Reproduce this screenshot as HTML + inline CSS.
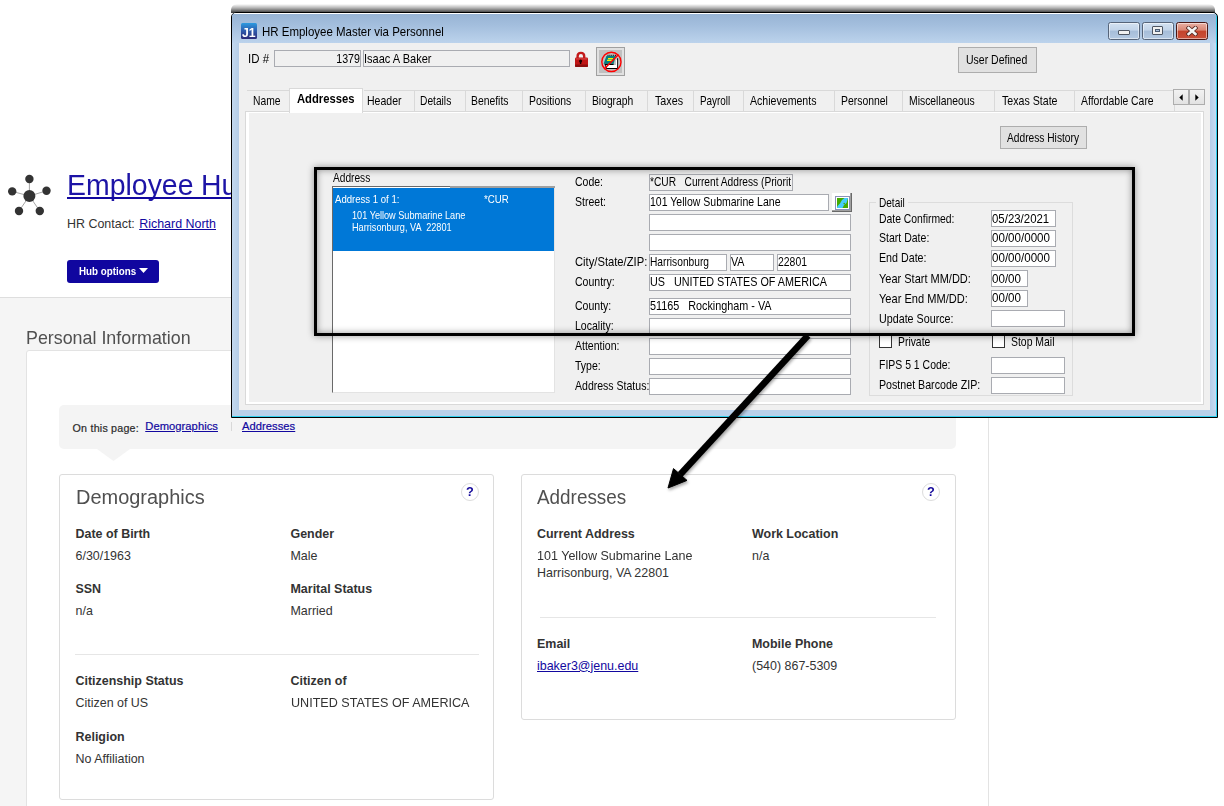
<!DOCTYPE html>
<html lang="en"><head><meta charset="utf-8"><title>Employee Hub - Personal Information</title>
<style>
html,body{margin:0;padding:0;background:#fff;}
body{width:1224px;height:806px;overflow:hidden;font-family:"Liberation Sans",sans-serif;}
#root{position:relative;width:1224px;height:806px;overflow:hidden;background:#fff;}
.t{position:absolute;white-space:pre;transform-origin:0 50%;display:block;}
.b{position:absolute;box-sizing:border-box;}
.u{text-decoration:underline;}
.tb{background:#fff;border:1px solid #a9abb1;}
.tbd{background:#f0f0f0;border:1px solid #a9abb1;}
.btn{background:#e1e1e1;border:1px solid #adadad;}
.card{background:#fff;border:1px solid #dcdcdc;border-radius:3px;}
.hr{background:#e6e6e6;}
.tab{border-top:1px solid #d9d9d9;border-right:1px solid #d9d9d9;background:#f0f0f0;}
.chk{background:#fff;border:1px solid #333;}

</style></head>
<body>
<div id="root">
<div class="b" style="left:0px;top:298px;width:989px;height:508px;background:#f5f5f5;"></div>
<div class="b" style="left:0px;top:297px;width:989px;height:1px;background:#dedede;"></div>
<svg class="b" style="left:5px;top:172px" width="50" height="46" viewBox="5 172 50 46">
<g stroke="#666" stroke-width=".6" fill="#333">
<line x1="29.4" y1="196" x2="29.4" y2="179"/><line x1="29.4" y1="196" x2="12.2" y2="191.4"/>
<line x1="29.4" y1="196" x2="46.5" y2="190.8"/><line x1="29.4" y1="196" x2="19" y2="211"/>
<line x1="29.4" y1="196" x2="39.8" y2="211"/>
<circle cx="29.4" cy="196" r="6" stroke="none"/><circle cx="29.4" cy="179" r="4.2" stroke="none"/>
<circle cx="12.2" cy="191.4" r="4.2" stroke="none"/><circle cx="46.5" cy="190.8" r="4.2" stroke="none"/>
<circle cx="19" cy="211" r="4.2" stroke="none"/><circle cx="39.8" cy="211" r="4.2" stroke="none"/>
</g></svg>
<span class="t" style="left:67.00px;top:170.13px;font-size:29.5px;line-height:29.5px;color:#1d14a6;transform:scaleX(0.9643);">Employee</span>
<span class="t" style="left:200.50px;top:170.13px;font-size:29.5px;line-height:29.5px;color:#1d14a6;transform:scaleX(0.9609);">Hub</span>
<div class="b" style="left:67px;top:197.2px;width:190px;height:2px;background:#12089f;"></div>
<span class="t" style="left:67.00px;top:218.45px;font-size:12.46px;line-height:12.46px;color:#333;">HR Contact:</span>
<span class="t u" style="left:139.20px;top:218.45px;font-size:12.46px;line-height:12.46px;color:#12089f;">Richard North</span>
<div class="b" style="left:67px;top:260px;width:92px;height:23px;background:#10069f;border-radius:3px;"></div>
<span class="t" style="left:78.60px;top:266.26px;font-size:10.8px;line-height:10.8px;color:#fff;font-weight:bold;transform:scaleX(0.9065);">Hub options</span>
<svg class="b" style="left:139px;top:267.7px" width="9" height="5" viewBox="0 0 9 5"><path d="M0 0H9L4.5 5Z" fill="#fff"/></svg>
<span class="t" style="left:26.20px;top:328.86px;font-size:18.6px;line-height:18.6px;color:#505050;transform:scaleX(0.9596);">Personal Information</span>
<div class="b" style="left:26px;top:350px;width:963px;height:470px;background:#fff;border:1px solid #e3e3e3;border-radius:3px 0 0 0;"></div>
<div class="b" style="left:59px;top:405px;width:897px;height:44px;background:#f4f4f4;border-radius:5px;"></div>
<svg class="b" style="left:97px;top:448.5px" width="33" height="12" viewBox="0 0 33 12"><path d="M0 0H33L16.5 12Z" fill="#f4f4f4"/></svg>
<span class="t" style="left:72.60px;top:423.39px;font-size:10.7px;line-height:10.7px;color:#2b2b2b;-webkit-text-stroke:.2px #2b2b2b;letter-spacing:0.213px;">On this page:</span>
<span class="t u" style="left:145.25px;top:420.52px;font-size:11.2px;line-height:11.2px;color:#12089f;-webkit-text-stroke:.2px #12089f;letter-spacing:0.049px;">Demographics</span>
<div class="b" style="left:231px;top:422px;width:1px;height:9px;background:#d8d8d8;"></div>
<span class="t u" style="left:242.00px;top:420.52px;font-size:11.2px;line-height:11.2px;color:#12089f;-webkit-text-stroke:.2px #12089f;letter-spacing:0.042px;">Addresses</span>
<div class="b card" style="left:59px;top:474px;width:435px;height:326px;"></div>
<span class="t" style="left:75.75px;top:487.86px;font-size:19.6px;line-height:19.6px;color:#505050;transform:scaleX(1.0188);">Demographics</span>
<span class="t" style="left:75.50px;top:528.15px;font-size:12.46px;line-height:12.46px;color:#333;font-weight:bold;">Date of Birth</span>
<span class="t" style="left:75.50px;top:550.15px;font-size:12.46px;line-height:12.46px;color:#333;">6/30/1963</span>
<span class="t" style="left:290.50px;top:528.15px;font-size:12.46px;line-height:12.46px;color:#333;font-weight:bold;">Gender</span>
<span class="t" style="left:290.50px;top:550.15px;font-size:12.46px;line-height:12.46px;color:#333;">Male</span>
<span class="t" style="left:75.50px;top:583.15px;font-size:12.46px;line-height:12.46px;color:#333;font-weight:bold;">SSN</span>
<span class="t" style="left:75.50px;top:605.15px;font-size:12.46px;line-height:12.46px;color:#333;">n/a</span>
<span class="t" style="left:290.50px;top:583.15px;font-size:12.46px;line-height:12.46px;color:#333;font-weight:bold;">Marital Status</span>
<span class="t" style="left:290.50px;top:605.15px;font-size:12.46px;line-height:12.46px;color:#333;">Married</span>
<div class="b hr" style="left:75px;top:654px;width:404px;height:1px;"></div>
<span class="t" style="left:75.50px;top:675.15px;font-size:12.46px;line-height:12.46px;color:#333;font-weight:bold;">Citizenship Status</span>
<span class="t" style="left:75.50px;top:697.15px;font-size:12.46px;line-height:12.46px;color:#333;">Citizen of US</span>
<span class="t" style="left:290.50px;top:675.15px;font-size:12.46px;line-height:12.46px;color:#333;font-weight:bold;">Citizen of</span>
<span class="t" style="left:290.50px;top:697.15px;font-size:12.46px;line-height:12.46px;color:#333;transform:scaleX(1.0104);">UNITED STATES OF AMERICA</span>
<span class="t" style="left:75.50px;top:731.15px;font-size:12.46px;line-height:12.46px;color:#333;font-weight:bold;">Religion</span>
<span class="t" style="left:75.50px;top:753.15px;font-size:12.46px;line-height:12.46px;color:#333;">No Affiliation</span>
<div class="b" style="left:461px;top:483px;width:18px;height:18px;background:#fff;border:1px solid #dcdcdc;border-radius:50%;"></div>
<span class="t" style="left:466.10px;top:485.49px;font-size:13.6px;line-height:13.6px;color:#14089a;font-weight:bold;transform:scaleX(0.9389);">?</span>
<div class="b card" style="left:521px;top:474px;width:435px;height:246px;"></div>
<span class="t" style="left:537.00px;top:487.86px;font-size:19.6px;line-height:19.6px;color:#505050;transform:scaleX(0.9638);">Addresses</span>
<div class="b" style="left:922px;top:483px;width:18px;height:18px;background:#fff;border:1px solid #dcdcdc;border-radius:50%;"></div>
<span class="t" style="left:927.10px;top:485.49px;font-size:13.6px;line-height:13.6px;color:#14089a;font-weight:bold;transform:scaleX(0.9389);">?</span>
<span class="t" style="left:537.00px;top:527.65px;font-size:12.46px;line-height:12.46px;color:#333;font-weight:bold;">Current Address</span>
<span class="t" style="left:537.00px;top:549.65px;font-size:12.46px;line-height:12.46px;color:#333;transform:scaleX(1.0065);">101 Yellow Submarine Lane</span>
<span class="t" style="left:537.00px;top:566.75px;font-size:12.46px;line-height:12.46px;color:#333;">Harrisonburg, VA 22801</span>
<span class="t" style="left:752.00px;top:527.65px;font-size:12.46px;line-height:12.46px;color:#333;font-weight:bold;">Work Location</span>
<span class="t" style="left:752.00px;top:549.65px;font-size:12.46px;line-height:12.46px;color:#333;">n/a</span>
<div class="b hr" style="left:540px;top:617px;width:396px;height:1px;"></div>
<span class="t" style="left:537.00px;top:637.65px;font-size:12.46px;line-height:12.46px;color:#333;font-weight:bold;">Email</span>
<span class="t u" style="left:537.00px;top:659.65px;font-size:12.46px;line-height:12.46px;color:#12089f;">ibaker3@jenu.edu</span>
<span class="t" style="left:752.00px;top:637.65px;font-size:12.46px;line-height:12.46px;color:#333;font-weight:bold;">Mobile Phone</span>
<span class="t" style="left:752.00px;top:659.65px;font-size:12.46px;line-height:12.46px;color:#333;">(540) 867-5309</span>
<div class="b" style="left:231px;top:4px;width:984px;height:9px;background:linear-gradient(to bottom,rgba(0,0,0,0),rgba(0,0,0,.3) 45%,rgba(0,0,0,.8));border-radius:6px 6px 0 0;filter:blur(.6px);"></div>
<div class="b" style="left:231px;top:12px;width:987px;height:406px;background:#b9d1ea;border:1px solid #000;border-radius:5px 5px 0 0;box-shadow:inset -1px -1px 0 0 #2fd0ee;"></div>
<div class="b" style="left:232px;top:13px;width:984px;height:30px;background:linear-gradient(to bottom,#fff 0,#fff 1px,#98b4d4 1px,#a3bedd 40%,#bcd3ec 100%);border-radius:4px 4px 0 0;"></div>
<div class="b" style="left:232px;top:43px;width:7px;height:367px;background:linear-gradient(to right,#c3d8ee,#b5cde8);"></div>
<div class="b" style="left:1210px;top:43px;width:6px;height:367px;background:linear-gradient(to right,#b5cde8,#c6dcf2);"></div>
<div class="b" style="left:239px;top:43px;width:971px;height:367px;background:#f0f0f0;"></div>
<div class="b" style="left:241px;top:23px;width:16px;height:16px;background:linear-gradient(to bottom,#2c9be0 0,#2e5fb0 45%,#2b2a78 100%);border-radius:1.5px;"></div>
<span class="t" style="left:242.20px;top:25.57px;font-size:13.5px;line-height:13.5px;color:#fff;font-weight:bold;transform:scaleX(0.9057);">J1</span>
<span class="t" style="left:261.60px;top:25.97px;font-size:12.2px;line-height:12.2px;color:#000;transform:scaleX(0.9418);">HR Employee Master via Personnel</span>
<div class="b" style="left:1108px;top:22px;width:31.6px;height:18px;background:linear-gradient(to bottom,#d3e1f1 0,#c2d4e9 45%,#a6bdd9 50%,#b4c9e2 100%);border:1px solid #566479;border-radius:2.5px;box-shadow:inset 0 0 0 1px rgba(255,255,255,.5);"></div>
<div class="b" style="left:1142px;top:22px;width:31.6px;height:18px;background:linear-gradient(to bottom,#d3e1f1 0,#c2d4e9 45%,#a6bdd9 50%,#b4c9e2 100%);border:1px solid #566479;border-radius:2.5px;box-shadow:inset 0 0 0 1px rgba(255,255,255,.5);"></div>
<div class="b" style="left:1176px;top:22px;width:32px;height:18px;background:linear-gradient(to bottom,#e9b0a4 0,#d98573 45%,#c4432b 50%,#c9503a 100%);border:1px solid #4a1714;border-radius:2.5px;box-shadow:inset 0 0 0 1px rgba(255,255,255,.5);"></div>
<div class="b" style="left:1118px;top:30px;width:12px;height:5px;background:#f0f0f0;border:1px solid #4d5562;border-radius:1px;"></div>
<div class="b" style="left:1152px;top:26px;width:11px;height:9px;background:#f0f0f0;border:1px solid #4d5562;border-radius:1px;"></div>
<div class="b" style="left:1155px;top:29px;width:5px;height:3px;background:#a9bfda;border:1px solid #4a5a70;"></div>
<svg class="b" style="left:1186px;top:25.5px" width="12" height="10" viewBox="0 0 12 10"><path d="M2.6 2L9.4 8M9.4 2L2.6 8" stroke="#5a2a22" stroke-width="4.3" stroke-linecap="square"/><path d="M2.6 2L9.4 8M9.4 2L2.6 8" stroke="#f4f4f4" stroke-width="2.6" stroke-linecap="square"/></svg>
<span class="t" style="left:248.00px;top:52.00px;font-size:13px;line-height:13px;color:#000;transform:scaleX(0.8808);">ID #</span>
<div class="b tbd" style="left:274px;top:50px;width:87px;height:17px;"></div>
<span class="t" style="left:0.00px;top:52.00px;font-size:13px;line-height:13px;color:#000;transform:scaleX(0.8200);left:auto;right:864.25px;transform-origin:100% 50%;">1379</span>
<div class="b tbd" style="left:363px;top:50px;width:207px;height:17px;"></div>
<span class="t" style="left:363.70px;top:52.00px;font-size:13px;line-height:13px;color:#000;transform:scaleX(0.8491);">Isaac A Baker</span>
<svg class="b" style="left:574px;top:51px" width="15" height="17" viewBox="574 51 15 17">
<path d="M577.6 58.5V56.2C577.6 53.9 579 52.9 580.9 52.9S584.2 53.9 584.2 56.2V58.5" fill="none" stroke="#c31a1a" stroke-width="2.4"/>
<rect x="575" y="57.6" width="13" height="9.3" rx="1.2" fill="#c01616"/>
<rect x="575" y="64.6" width="13" height="2.3" rx="1" fill="#8c0f0f"/>
<rect x="576" y="58.3" width="11" height="1.2" fill="#e04a4a" opacity=".8"/>
<circle cx="580.6" cy="61" r="1.5" fill="#1a0000"/><rect x="579.9" y="61" width="1.4" height="3" fill="#1a0000"/>
</svg>
<div class="b" style="left:596px;top:47px;width:29px;height:29px;background:#e1e1e1;border:1px solid #a0a0a0;"></div>
<div class="b" style="left:599px;top:50px;width:23px;height:23px;background:#c0c0c0;"></div>
<svg class="b" style="left:599px;top:50px" width="24" height="24" viewBox="599 50 24 24">
<path d="M604.1 63.5H613.6V65.1H605.6L607 68.1H617.1V58.2H618.1V68.9H606.4L604.9 65.1Z" fill="#000"/>
<path d="M606 65.1H615.9V59.8H617.1V68.1H607.2Z" fill="#fff"/>
<path d="M606.4 56L615.9 56L613.6 63.7L603.6 63.7Z" fill="#008080"/>
<path d="M607.5 55.4H616" stroke="#111" stroke-width="1.3" stroke-dasharray="1 .9"/>
<path d="M608 58.6H613M607 60.4H611.9" stroke="#f6f600" stroke-width="1.3"/>
<circle cx="611.4" cy="61.9" r="9.6" fill="none" stroke="#f00" stroke-width="1.4"/>
<path d="M604.4 68.8L618.3 54.8" stroke="#f00" stroke-width="1.5"/>
</svg>
<div class="b btn" style="left:958px;top:47px;width:79px;height:26px;"></div>
<span class="t" style="left:966.25px;top:53.25px;font-size:13px;line-height:13px;color:#000;transform:scaleX(0.8073);">User Defined</span>
<div class="b" style="left:245px;top:111px;width:959px;height:294px;background:#f0f0f0;border:1px solid #d9d9d9;box-shadow:inset 3px 1px 0 #fff,inset -2px -2px 0 #fff;"></div>
<div class="b tab" style="left:247px;top:90px;width:43px;height:21px;"></div>
<span class="t" style="left:252.70px;top:94.00px;font-size:13px;line-height:13px;color:#000;transform:scaleX(0.7930);">Name</span>
<div class="b tab" style="left:364px;top:90px;width:51px;height:21px;"></div>
<span class="t" style="left:367.25px;top:94.00px;font-size:13px;line-height:13px;color:#000;transform:scaleX(0.8091);">Header</span>
<div class="b tab" style="left:415px;top:90px;width:51px;height:21px;"></div>
<span class="t" style="left:420.25px;top:94.00px;font-size:13px;line-height:13px;color:#000;transform:scaleX(0.7864);">Details</span>
<div class="b tab" style="left:466px;top:90px;width:57px;height:21px;"></div>
<span class="t" style="left:471.00px;top:94.00px;font-size:13px;line-height:13px;color:#000;transform:scaleX(0.7983);">Benefits</span>
<div class="b tab" style="left:523px;top:90px;width:63px;height:21px;"></div>
<span class="t" style="left:529.25px;top:94.00px;font-size:13px;line-height:13px;color:#000;transform:scaleX(0.8000);">Positions</span>
<div class="b tab" style="left:586px;top:90px;width:62px;height:21px;"></div>
<span class="t" style="left:592.00px;top:94.00px;font-size:13px;line-height:13px;color:#000;transform:scaleX(0.7926);">Biograph</span>
<div class="b tab" style="left:648px;top:90px;width:46px;height:21px;"></div>
<span class="t" style="left:654.50px;top:94.00px;font-size:13px;line-height:13px;color:#000;transform:scaleX(0.8245);">Taxes</span>
<div class="b tab" style="left:694px;top:90px;width:50px;height:21px;"></div>
<span class="t" style="left:700.00px;top:94.00px;font-size:13px;line-height:13px;color:#000;transform:scaleX(0.7612);">Payroll</span>
<div class="b tab" style="left:744px;top:90px;width:91px;height:21px;"></div>
<span class="t" style="left:749.75px;top:94.00px;font-size:13px;line-height:13px;color:#000;transform:scaleX(0.8144);">Achievements</span>
<div class="b tab" style="left:835px;top:90px;width:68px;height:21px;"></div>
<span class="t" style="left:841.00px;top:94.00px;font-size:13px;line-height:13px;color:#000;transform:scaleX(0.8000);">Personnel</span>
<div class="b tab" style="left:903px;top:90px;width:92px;height:21px;"></div>
<span class="t" style="left:909.25px;top:94.00px;font-size:13px;line-height:13px;color:#000;transform:scaleX(0.7982);">Miscellaneous</span>
<div class="b tab" style="left:995px;top:90px;width:80px;height:21px;"></div>
<span class="t" style="left:1001.75px;top:94.00px;font-size:13px;line-height:13px;color:#000;transform:scaleX(0.8171);">Texas State</span>
<div class="b tab" style="left:1075px;top:90px;width:100px;height:21px;"></div>
<span class="t" style="left:1081.25px;top:94.00px;font-size:13px;line-height:13px;color:#000;transform:scaleX(0.8000);">Affordable Care</span>
<div class="b" style="left:289px;top:88px;width:74px;height:25px;background:#fff;border:1px solid #d9d9d9;border-bottom:none;"></div>
<span class="t" style="left:297.25px;top:92.00px;font-size:13px;line-height:13px;color:#000;font-weight:bold;transform:scaleX(0.8649);">Addresses</span>
<div class="b" style="left:1173px;top:89px;width:16px;height:16px;background:linear-gradient(#f2f2f2,#e2e2e2);border:1px solid #adadad;"></div>
<div class="b" style="left:1189px;top:89px;width:16px;height:16px;background:linear-gradient(#f2f2f2,#e2e2e2);border:1px solid #adadad;"></div>
<svg class="b" style="left:1179px;top:93.5px" width="4" height="7" viewBox="0 0 4 7"><path d="M3.7 .3V6.7L.3 3.5Z" fill="#000"/></svg>
<svg class="b" style="left:1195px;top:93.5px" width="4" height="7" viewBox="0 0 4 7"><path d="M.3 .3V6.7L3.7 3.5Z" fill="#000"/></svg>
<div class="b btn" style="left:1000px;top:126px;width:87px;height:23px;"></div>
<span class="t" style="left:1007.25px;top:131.00px;font-size:13px;line-height:13px;color:#000;transform:scaleX(0.7847);">Address History</span>
<span class="t" style="left:333.00px;top:171.00px;font-size:13px;line-height:13px;color:#000;transform:scaleX(0.7811);">Address</span>
<div class="b" style="left:332px;top:186px;width:223px;height:207px;background:#fff;border:1px solid #e3e3e3;border-left-color:#696969;border-top-color:#696969;"></div>
<div class="b" style="left:333px;top:188px;width:221px;height:63px;background:#0078d7;"></div>
<div class="b" style="left:450px;top:186px;width:105px;height:2px;background:#a0a0a0;"></div>
<span class="t" style="left:335.25px;top:195.07px;font-size:10.2px;line-height:10.2px;color:#fff;transform:scaleX(0.9401);">Address 1 of 1:</span>
<span class="t" style="left:484.25px;top:195.07px;font-size:10.2px;line-height:10.2px;color:#fff;transform:scaleX(0.9494);">*CUR</span>
<span class="t" style="left:351.75px;top:211.37px;font-size:10.2px;line-height:10.2px;color:#fff;transform:scaleX(0.8975);">101 Yellow Submarine Lane</span>
<span class="t" style="left:351.75px;top:223.07px;font-size:10.2px;line-height:10.2px;color:#fff;transform:scaleX(0.8991);">Harrisonburg, VA  22801</span>
<span class="t" style="left:574.50px;top:174.75px;font-size:13px;line-height:13px;color:#000;transform:scaleX(0.8071);">Code:</span>
<span class="t" style="left:574.50px;top:194.75px;font-size:13px;line-height:13px;color:#000;transform:scaleX(0.8100);">Street:</span>
<span class="t" style="left:574.50px;top:255.25px;font-size:13px;line-height:13px;color:#000;transform:scaleX(0.8621);">City/State/ZIP:</span>
<span class="t" style="left:574.50px;top:275.25px;font-size:13px;line-height:13px;color:#000;transform:scaleX(0.8100);">Country:</span>
<span class="t" style="left:574.50px;top:299.00px;font-size:13px;line-height:13px;color:#000;transform:scaleX(0.8100);">County:</span>
<span class="t" style="left:574.50px;top:319.00px;font-size:13px;line-height:13px;color:#000;transform:scaleX(0.8100);">Locality:</span>
<span class="t" style="left:574.50px;top:339.00px;font-size:13px;line-height:13px;color:#000;transform:scaleX(0.8100);">Attention:</span>
<span class="t" style="left:574.50px;top:359.00px;font-size:13px;line-height:13px;color:#000;transform:scaleX(0.8100);">Type:</span>
<span class="t" style="left:574.50px;top:379.00px;font-size:13px;line-height:13px;color:#000;transform:scaleX(0.8100);">Address Status:</span>
<div class="b tbd" style="left:649px;top:174px;width:144px;height:17px;"></div>
<span class="t" style="left:649.90px;top:175.00px;font-size:13px;line-height:13px;color:#000;transform:scaleX(0.7838);">*CUR   Current Address (Priorit</span>
<div class="b tb" style="left:649px;top:194px;width:180px;height:17px;"></div>
<span class="t" style="left:649.90px;top:195.00px;font-size:13px;line-height:13px;color:#000;transform:scaleX(0.8096);">101 Yellow Submarine Lane</span>
<div class="b" style="left:832px;top:193px;width:20px;height:19px;background:#fff;border-right:1px solid #696969;border-bottom:1px solid #696969;box-shadow:inset -1px -1px 0 #a0a0a0;"></div>
<div class="b" style="left:835px;top:196px;width:15px;height:14px;background:#fff;border:1px solid #8a93b8;"></div>
<svg class="b" style="left:837px;top:198px" width="11" height="10" viewBox="0 0 11 10"><rect width="11" height="10" fill="#44aa00"/><path d="M0 10L.5 8L3 5.5L5 2L7.5 0H11L9.5 5L7 7L5.5 10Z" fill="#44ccff"/><circle cx="7.2" cy="5.6" r=".8" fill="#44aa00"/></svg>
<div class="b tb" style="left:649px;top:214px;width:202px;height:17px;"></div>
<div class="b tb" style="left:649px;top:234px;width:202px;height:17px;"></div>
<div class="b tb" style="left:649px;top:254px;width:78px;height:17px;"></div>
<span class="t" style="left:649.90px;top:255.25px;font-size:13px;line-height:13px;color:#000;transform:scaleX(0.7851);">Harrisonburg</span>
<div class="b tb" style="left:730px;top:254px;width:44px;height:17px;"></div>
<span class="t" style="left:730.90px;top:255.25px;font-size:13px;line-height:13px;color:#000;transform:scaleX(0.8243);">VA</span>
<div class="b tb" style="left:777px;top:254px;width:74px;height:17px;"></div>
<span class="t" style="left:777.90px;top:255.25px;font-size:13px;line-height:13px;color:#000;transform:scaleX(0.8022);">22801</span>
<div class="b tb" style="left:649px;top:274px;width:202px;height:17px;"></div>
<span class="t" style="left:649.90px;top:275.25px;font-size:13px;line-height:13px;color:#000;transform:scaleX(0.8297);">US   UNITED STATES OF AMERICA</span>
<div class="b tb" style="left:649px;top:298px;width:202px;height:17px;"></div>
<span class="t" style="left:649.90px;top:299.00px;font-size:13px;line-height:13px;color:#000;transform:scaleX(0.8310);">51165   Rockingham - VA</span>
<div class="b tb" style="left:649px;top:318px;width:202px;height:17px;"></div>
<div class="b tb" style="left:649px;top:338px;width:202px;height:17px;"></div>
<div class="b tb" style="left:649px;top:358px;width:202px;height:17px;"></div>
<div class="b tb" style="left:649px;top:378px;width:202px;height:17px;"></div>
<div class="b" style="left:869px;top:202px;width:204px;height:194px;border:1px solid #dcdcdc;"></div>
<div class="b" style="left:876px;top:196px;width:32px;height:14px;background:#f0f0f0;"></div>
<span class="t" style="left:879.25px;top:196.00px;font-size:13px;line-height:13px;color:#000;transform:scaleX(0.7747);">Detail</span>
<span class="t" style="left:879.10px;top:212.00px;font-size:13px;line-height:13px;color:#000;transform:scaleX(0.7977);">Date Confirmed:</span>
<div class="b tb" style="left:991px;top:210px;width:65px;height:17px;"></div>
<span class="t" style="left:992.30px;top:211.70px;font-size:13px;line-height:13px;color:#000;transform:scaleX(0.8791);">05/23/2021</span>
<span class="t" style="left:879.10px;top:231.10px;font-size:13px;line-height:13px;color:#000;transform:scaleX(0.8095);">Start Date:</span>
<div class="b tb" style="left:991px;top:230px;width:65px;height:17px;"></div>
<span class="t" style="left:992.30px;top:230.80px;font-size:13px;line-height:13px;color:#000;transform:scaleX(0.8914);">00/00/0000</span>
<span class="t" style="left:879.10px;top:250.90px;font-size:13px;line-height:13px;color:#000;transform:scaleX(0.8216);">End Date:</span>
<div class="b tb" style="left:991px;top:250px;width:65px;height:17px;"></div>
<span class="t" style="left:992.30px;top:250.60px;font-size:13px;line-height:13px;color:#000;transform:scaleX(0.8914);">00/00/0000</span>
<span class="t" style="left:879.10px;top:271.80px;font-size:13px;line-height:13px;color:#000;transform:scaleX(0.8453);">Year Start MM/DD:</span>
<div class="b tb" style="left:991px;top:270px;width:37px;height:17px;"></div>
<span class="t" style="left:992.30px;top:271.50px;font-size:13px;line-height:13px;color:#000;transform:scaleX(0.8914);">00/00</span>
<span class="t" style="left:879.10px;top:291.60px;font-size:13px;line-height:13px;color:#000;transform:scaleX(0.8515);">Year End MM/DD:</span>
<div class="b tb" style="left:991px;top:290px;width:37px;height:17px;"></div>
<span class="t" style="left:992.30px;top:291.30px;font-size:13px;line-height:13px;color:#000;transform:scaleX(0.8914);">00/00</span>
<span class="t" style="left:879.10px;top:311.70px;font-size:13px;line-height:13px;color:#000;transform:scaleX(0.8247);">Update Source:</span>
<div class="b tb" style="left:991px;top:310px;width:74px;height:17px;"></div>
<span class="t" style="left:879.10px;top:357.70px;font-size:13px;line-height:13px;color:#000;transform:scaleX(0.8044);">FIPS 5 1 Code:</span>
<div class="b tb" style="left:991px;top:357px;width:74px;height:17px;"></div>
<span class="t" style="left:879.10px;top:377.80px;font-size:13px;line-height:13px;color:#000;transform:scaleX(0.8190);">Postnet Barcode ZIP:</span>
<div class="b tb" style="left:991px;top:377px;width:74px;height:17px;"></div>
<div class="b chk" style="left:879px;top:335px;width:13px;height:13px;"></div>
<span class="t" style="left:898.20px;top:335.00px;font-size:13px;line-height:13px;color:#000;transform:scaleX(0.7983);">Private</span>
<div class="b chk" style="left:992px;top:335px;width:13px;height:13px;"></div>
<span class="t" style="left:1011.10px;top:335.00px;font-size:13px;line-height:13px;color:#000;transform:scaleX(0.8027);">Stop Mail</span>
<div class="b" style="left:314px;top:167px;width:821px;height:168.7px;border:3px solid #000;box-shadow:0 0 7px rgba(0,0,0,.4),inset 0 0 7px rgba(0,0,0,.4);"></div>
<svg class="b" style="left:640px;top:320px;filter:drop-shadow(1px 2px 1.5px rgba(0,0,0,.35));" width="200" height="190" viewBox="640 320 200 190">
<path d="M808 335.5L680.2 474.5" stroke="#000" stroke-width="6.5" fill="none"/>
<path d="M668 488L673.5 468.6L687 480.4Z" fill="#000" stroke="#000" stroke-width="1" stroke-linejoin="miter"/>
</svg>
</div>
</body></html>
